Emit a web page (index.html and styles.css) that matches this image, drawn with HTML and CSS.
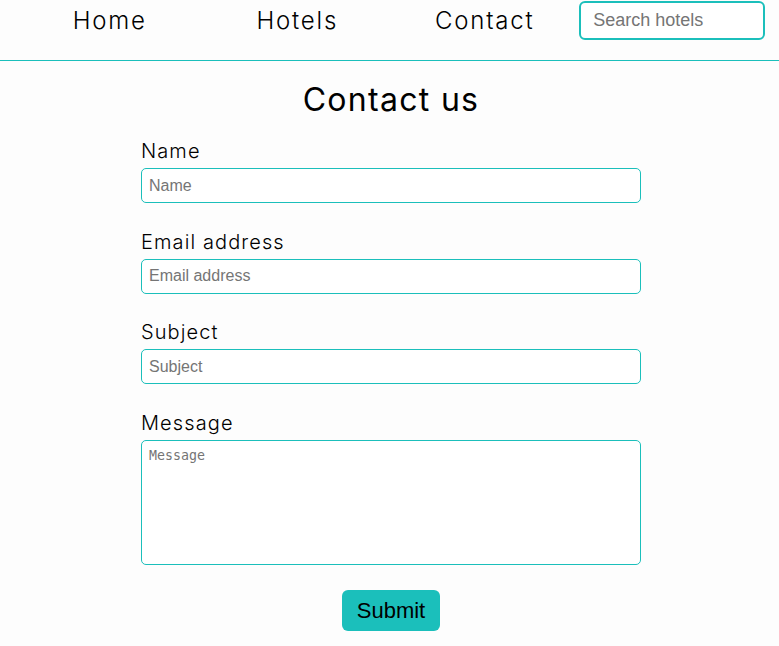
FILE: index.html
```html
<!DOCTYPE html>
<html lang="en">
<head>
<meta charset="utf-8">
<title>Contact us</title>
<link rel="stylesheet" href="styles.css">
</head>
<body>
<header class="site-header">
  <nav class="nav">
    <a class="nav-link" href="#">Home</a>
    <a class="nav-link" href="#">Hotels</a>
    <a class="nav-link" href="#">Contact</a>
    <input class="search" type="text" placeholder="Search hotels">
  </nav>
</header>
<main class="main">
  <h1 class="title">Contact us</h1>
  <form class="form">
    <div class="field">
      <label class="label" for="name">Name</label>
      <input class="input" id="name" type="text" placeholder="Name">
    </div>
    <div class="field">
      <label class="label" for="email">Email address</label>
      <input class="input" id="email" type="email" placeholder="Email address">
    </div>
    <div class="field">
      <label class="label" for="subject">Subject</label>
      <input class="input" id="subject" type="text" placeholder="Subject">
    </div>
    <div class="field">
      <label class="label" for="message">Message</label>
      <textarea class="textarea" id="message" placeholder="Message"></textarea>
    </div>
    <div class="actions">
      <button class="submit" type="button">Submit</button>
    </div>
  </form>
</main>
</body>
</html>
```
FILE: styles.css
```css
* { box-sizing: border-box; }
html, body { margin: 0; padding: 0; background: #fdfdfd; }
body { font-family: Inter, "Noto Sans", sans-serif; color: #000; }

.site-header {
  border-bottom: 1px solid #1bbfbb;
  height: 61px;
}
.nav {
  display: grid;
  grid-template-columns: repeat(4, 187.5px);
  margin-left: 16px;
  align-items: start;
}
.nav-link {
  justify-self: center;
  color: #000;
  text-decoration: none;
  font-size: 24px;
  font-weight: 300;
  letter-spacing: 1.8px;
  line-height: 42px;
}
.search {
  justify-self: center;
  margin-top: 1px;
  width: 186px;
  height: 39px;
  border: 2px solid #1bbfbb;
  border-radius: 6px;
  padding: 0 12px;
  font-family: "Liberation Sans", Arial, sans-serif;
  font-size: 18px;
  background: #fff;
}
.search::placeholder { color: #757575; }

.main {
  display: flex;
  flex-direction: column;
  align-items: center;
  padding-left: 3px;
}
.title {
  margin: 19px 0 20px;
  font-size: 32px;
  font-weight: 400;
  letter-spacing: 1.3px;
  line-height: 39px;
}
.form {
  width: 500px;
  display: flex;
  flex-direction: column;
  gap: 26.5px;
}
.field {
  display: flex;
  flex-direction: column;
  gap: 5px;
}
.label {
  font-size: 20px;
  font-weight: 300;
  letter-spacing: 1.1px;
  line-height: 24px;
}
.input, .textarea {
  width: 100%;
  border: 1px solid #1bbfbb;
  border-radius: 5px;
  background: #fff;
  padding: 0 7px;
}
.input {
  height: 35px;
  font-family: "Liberation Sans", Arial, sans-serif;
  font-size: 16px;
}
.textarea {
  height: 125px;
  padding: 7px 7px;
  resize: none;
  font-family: "DejaVu Sans Mono", monospace;
  font-size: 13.3px;
}
.input::placeholder, .textarea::placeholder { color: #757575; }

.actions {
  display: flex;
  justify-content: center;
  margin-top: -1px;
}
.submit {
  width: 98px;
  height: 41px;
  border: none;
  border-radius: 6px;
  background: #1bbfbb;
  color: #000;
  font-family: "Liberation Sans", Arial, sans-serif;
  font-size: 22px;
}
```
